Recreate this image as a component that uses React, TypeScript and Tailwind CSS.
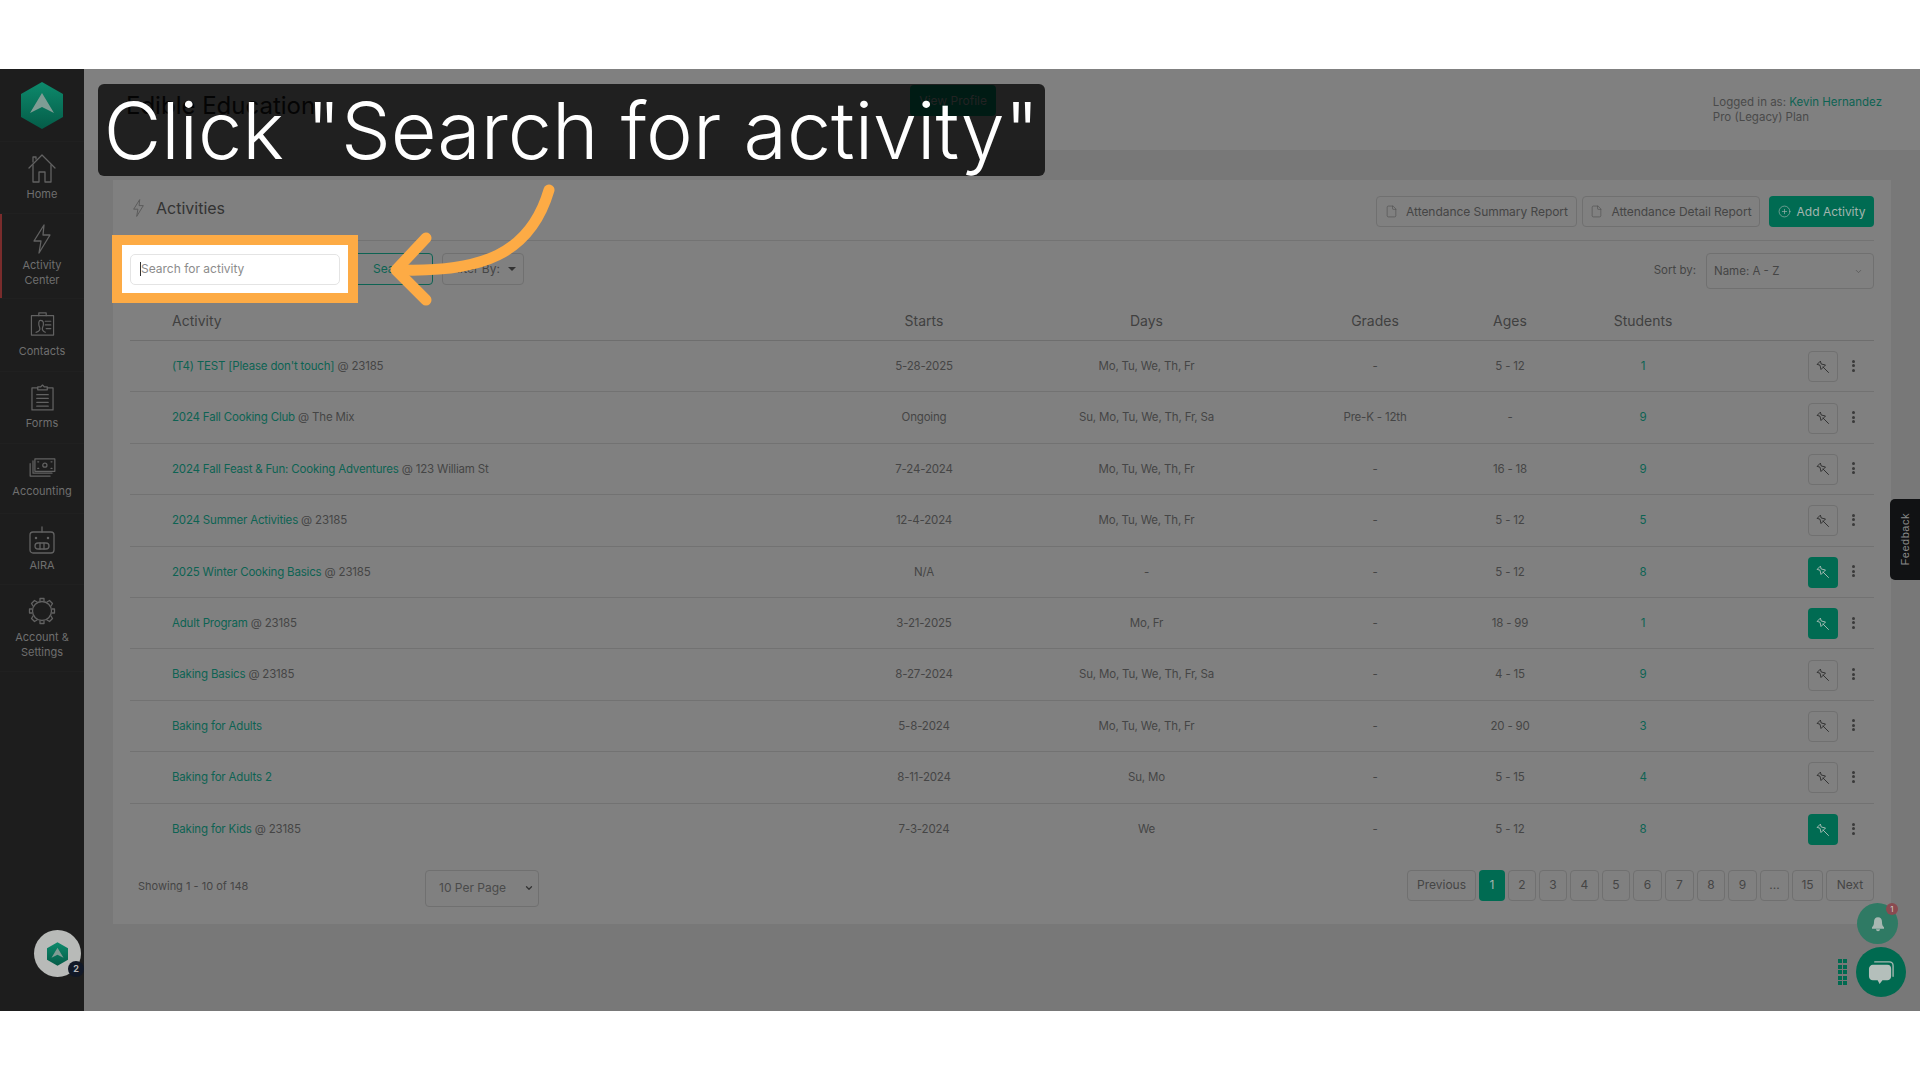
import { ChevronDown, CirclePlus, File } from 'lucide-react';

const rows = [
    { name: '(T4) TEST [Please don\'t touch]', place: '@ 23185', starts: '5-28-2025', days: 'Mo, Tu, We, Th, Fr', grades: '-', ages: '5 - 12', students: '1', pinned: false },
    { name: '2024 Fall Cooking Club', place: '@ The Mix', starts: 'Ongoing', days: 'Su, Mo, Tu, We, Th, Fr, Sa', grades: 'Pre-K - 12th', ages: '-', students: '9', pinned: false },
    { name: '2024 Fall Feast & Fun: Cooking Adventures', place: '@ 123 William St', starts: '7-24-2024', days: 'Mo, Tu, We, Th, Fr', grades: '-', ages: '16 - 18', students: '9', pinned: false },
    { name: '2024 Summer Activities', place: '@ 23185', starts: '12-4-2024', days: 'Mo, Tu, We, Th, Fr', grades: '-', ages: '5 - 12', students: '5', pinned: false },
    { name: '2025 Winter Cooking Basics', place: '@ 23185', starts: 'N/A', days: '-', grades: '-', ages: '5 - 12', students: '8', pinned: true },
    { name: 'Adult Program', place: '@ 23185', starts: '3-21-2025', days: 'Mo, Fr', grades: '-', ages: '18 - 99', students: '1', pinned: true },
    { name: 'Baking Basics', place: '@ 23185', starts: '8-27-2024', days: 'Su, Mo, Tu, We, Th, Fr, Sa', grades: '-', ages: '4 - 15', students: '9', pinned: false },
    { name: 'Baking for Adults', place: '', starts: '5-8-2024', days: 'Mo, Tu, We, Th, Fr', grades: '-', ages: '20 - 90', students: '3', pinned: false },
    { name: 'Baking for Adults 2', place: '', starts: '8-11-2024', days: 'Su, Mo', grades: '-', ages: '5 - 15', students: '4', pinned: false },
    { name: 'Baking for Kids', place: '@ 23185', starts: '7-3-2024', days: 'We', grades: '-', ages: '5 - 12', students: '8', pinned: true },
];

const pages = [
    { label: '2', w: 'w-[28px]' },
    { label: '3', w: 'w-[28px]' },
    { label: '4', w: 'w-[29px]' },
    { label: '5', w: 'w-[28px]' },
    { label: '6', w: 'w-[29px]' },
    { label: '7', w: 'w-[29px]' },
    { label: '8', w: 'w-[28px]' },
    { label: '9', w: 'w-[29px]' },
    { label: '...', w: 'w-[29px]' },
    { label: '15', w: 'w-[31px]' },
];

const gridCols = 'grid grid-cols-[704px_180px_265px_192px_78px_188px_137px] items-center';

function Logo({ className }: { className: string }) {
    return (
        <svg viewBox="0 0 42 47" className={className}>
            <defs>
                <linearGradient id="hex" x1="0" y1="0" x2="0" y2="1">
                    <stop offset="0" stopColor="#0d8a6c" />
                    <stop offset="1" stopColor="#055c48" />
                </linearGradient>
            </defs>
            <path d="M21 0 L42 12 V35 L21 47 L0 35 V12 Z" fill="url(#hex)" />
            <path d="M21 11 L33 31 L21 25 L9 31 Z" fill="#7f9c94" />
        </svg>
    );
}

function PinIcon({ color }: { color: string }) {
    return (
        <svg viewBox="0 0 14 14" className="w-[14px] h-[14px]" fill="none" stroke={color} strokeWidth="0.9" strokeLinejoin="round" strokeLinecap="round">
            <path d="M4.500 1.500 L5.200 4 L9.500 5 L5 9.500 L4 5.200 L1.500 4.500 Z" />
            <path d="M7 7 L12.500 12.500" />
        </svg>
    );
}

function NavIcon({ name }: { name: string }) {
    const common = { fill: 'none', stroke: '#626262', strokeWidth: 1.3, strokeLinejoin: 'round' as const, strokeLinecap: 'round' as const };
    if (name === 'home') {
        return (
            <svg viewBox="0 0 28 30" className="w-[28px] h-[30px]" {...common}>
                <path d="M1 14 L14 1 L27 14" />
                <path d="M5 11 V28 H11 V18 H17 V28 H23 V11" />
                <path d="M5 8 V3 H8 V5" />
            </svg>
        );
    }
    if (name === 'bolt') {
        return (
            <svg viewBox="0 0 18 30" className="w-[18px] h-[30px]" {...common}>
                <path d="M11 1 L1 17 H8 L6 29 L17 11 H10 Z" />
            </svg>
        );
    }
    if (name === 'contacts') {
        return (
            <svg viewBox="0 0 26 26" className="w-[25px] h-[24px]" {...common}>
                <path d="M1 4 H25 V25 H1 Z" />
                <path d="M9 4 V1 H17 V4" />
                <path d="M6 22 C9 21 11 20 10 17 C8 12 9 9 11 9 C14 9 15 12 13 17 C12 20 14 21 16 22" />
                <path d="M16 10 H22 M16 14 H22 M17 18 H22" />
            </svg>
        );
    }
    if (name === 'forms') {
        return (
            <svg viewBox="0 0 24 28" className="w-[23px] h-[27px]" {...common}>
                <path d="M7 4 H1 V27 H23 V4 H17" />
                <path d="M7 6 V3 H10 L12 1 L14 3 H17 V6 Z" />
                <path d="M6 11 H18 M6 15 H18 M6 19 H18 M6 23 H18" />
            </svg>
        );
    }
    if (name === 'money') {
        return (
            <svg viewBox="0 0 28 20" className="w-[27px] h-[19px]" {...common}>
                <path d="M6 1 H27 V14 H6 Z" />
                <path d="M4 3 V16 H24" />
                <path d="M1 6 V19 H22" />
                <circle cx="16.5" cy="7.5" r="2.2" />
                <path d="M9 4 H10 M23 4 H24 M9 11 H10 M23 11 H24" />
            </svg>
        );
    }
    if (name === 'bot') {
        return (
            <svg viewBox="0 0 26 28" className="w-[26px] h-[28px]" {...common}>
                <path d="M13 1 V6" />
                <rect x="1" y="6" width="24" height="21" rx="3" />
                <circle cx="7" cy="12" r="0.6" />
                <circle cx="19" cy="12" r="0.6" />
                <rect x="6" y="17" width="14" height="6" rx="3" />
                <path d="M11 17 V23 M15 17 V23" />
            </svg>
        );
    }
    return (
        <svg viewBox="0 0 28 28" className="w-[28px] h-[28px]" {...common}>
            <circle cx="14" cy="14" r="9.5" />
            <path d="M12 4 V1.500 H16 V4 M24 12 H26.500 V16 H24 M12 24 V26.500 H16 V24 M4 12 H1.500 V16 H4" />
            <path d="M5 9 L3.500 6.500 L6.500 3.500 L9 5 M19 5 L21.500 3.500 L24.500 6.500 L23 9 M23 19 L24.500 21.500 L21.500 24.500 L19 23 M9 23 L6.500 24.500 L3.500 21.500 L5 19" />
        </svg>
    );
}

function NavItem({ icon, label, height, gap, active }: { icon: string; label: string[]; height: string; gap: string; active?: boolean }) {
    return (
        <div className={`${height} relative flex flex-col items-center justify-center border-b border-[#202020]`}>
            {active && <div className="absolute left-0 top-0 bottom-0 w-[2px] bg-[#7a2c2c]" />}
            <NavIcon name={icon} />
            <div className={`${gap} text-[11px] leading-[15px] text-center text-[#6f6f6f]`}>
                {label.map((line) => (
                    <div key={line}>{line}</div>
                ))}
            </div>
        </div>
    );
}

function Sidebar() {
    return (
        <aside className="w-[84px] shrink-0 bg-[#1d1d1d] flex flex-col">
            <div className="h-[73px] flex items-center justify-center border-b border-[#202020]">
                <Logo className="w-[42px] h-[47px]" />
            </div>
            <NavItem icon="home" label={['Home']} height="h-[72px]" gap="mt-[3px]" />
            <NavItem icon="bolt" label={['Activity', 'Center']} height="h-[85px]" gap="mt-[4px]" active />
            <NavItem icon="contacts" label={['Contacts']} height="h-[73px]" gap="mt-[8px]" />
            <NavItem icon="forms" label={['Forms']} height="h-[72px]" gap="mt-[5px]" />
            <NavItem icon="money" label={['Accounting']} height="h-[70px]" gap="mt-[7px]" />
            <NavItem icon="bot" label={['AIRA']} height="h-[71px]" gap="mt-[4px]" />
            <NavItem icon="gear" label={['Account &', 'Settings']} height="h-[87px]" gap="mt-[5px]" />
        </aside>
    );
}

function ReportButton({ label, w }: { label: string; w: string }) {
    return (
        <button className={`${w} h-[31px] flex items-center justify-center gap-[8px] rounded-[4px] border border-[#707070] text-[12px] tracking-[-0.05px] text-[#454545]`}>
            <File size={13} strokeWidth={1.2} className="text-[#505050]" />
            {label}
        </button>
    );
}

function Row({ row, last }: { row: (typeof rows)[number]; last: boolean }) {
    return (
        <div className={`${gridCols} h-[51.4px] pt-[1px] text-[11.5px] tracking-[-0.18px] text-[#454545] text-center ${last ? '' : 'border-b border-[#727272]'}`}>
            <div className="pl-[42px] text-left">
                <span className="text-[#0d6353]">{row.name}</span> {row.place}
            </div>
            <div>{row.starts}</div>
            <div>{row.days}</div>
            <div>{row.grades}</div>
            <div>{row.ages}</div>
            <div className="text-[#0d6353]">{row.students}</div>
            <div className="flex items-center justify-end gap-[14px] pr-[19px]">
                {row.pinned ? (
                    <button className="w-[30px] h-[31px] rounded-[4px] bg-[#006b52] flex items-center justify-center">
                        <PinIcon color="#b0c0ba" />
                    </button>
                ) : (
                    <button className="w-[30px] h-[31px] rounded-[4px] border border-[#707070] flex items-center justify-center">
                        <PinIcon color="#2a2a2a" />
                    </button>
                )}
                <div className="flex flex-col gap-[1.5px] -mt-[2px]">
                    <span className="w-[3px] h-[3px] rounded-full bg-[#3a3a3a]" />
                    <span className="w-[3px] h-[3px] rounded-full bg-[#3a3a3a]" />
                    <span className="w-[3px] h-[3px] rounded-full bg-[#3a3a3a]" />
                </div>
            </div>
        </div>
    );
}

function Pagination() {
    return (
        <div className="flex items-center gap-[3px] text-[12px] text-[#454545]">
            <div className="w-[69px] h-[31px] flex items-center justify-center rounded-[4px] border border-[#707070]">Previous</div>
            <div className="w-[26px] h-[31px] flex items-center justify-center rounded-[4px] bg-[#006b52] text-[#a3b5af]">1</div>
            {pages.map((p) => (
                <div key={p.label} className={`${p.w} h-[31px] flex items-center justify-center rounded-[4px] border border-[#707070]`}>
                    {p.label}
                </div>
            ))}
            <div className="w-[48px] h-[31px] flex items-center justify-center rounded-[4px] border border-[#707070]">Next</div>
        </div>
    );
}

function Card() {
    return (
        <section className="h-[744px] bg-[#808080] px-[17px]">
            <div className="h-[61px] flex items-center justify-between border-b border-[#737373] pt-[3px]">
                <div className="flex items-center gap-[12px] pl-[3px] pb-[7px]">
                    <svg viewBox="0 0 18 30" className="w-[11px] h-[18px]" fill="none" stroke="#5a5a5a" strokeWidth="1.6" strokeLinejoin="round">
                        <path d="M11 1 L1 17 H8 L6 29 L17 11 H10 Z" />
                    </svg>
                    <h2 className="text-[16px] text-[#333333]">Activities</h2>
                </div>
                <div className="flex items-center">
                    <ReportButton label="Attendance Summary Report" w="w-[201px]" />
                    <div className="w-[5px]" />
                    <ReportButton label="Attendance Detail Report" w="w-[178px]" />
                    <button className="ml-[9px] w-[105px] h-[31px] flex items-center justify-center gap-[6px] rounded-[4px] bg-[#006b52] text-[12px] text-[#a3b5af]">
                        <CirclePlus size={13} strokeWidth={1.2} />
                        Add Activity
                    </button>
                </div>
            </div>
            <div className="h-[48px] pt-[12px] flex items-start justify-between">
                <div className="flex items-center">
                    <div className="w-[210px] h-[31px]" />
                    <button className="ml-[10px] w-[83px] h-[32px] rounded-[4px] border border-[#0d6353] text-[12px] text-[#0d6353] text-left pl-[22px]">Search</button>
                    <button className="ml-[9px] w-[82px] h-[32px] rounded-[4px] border border-[#707070] flex items-center justify-center gap-[8px] text-[12px] text-[#454545]">
                        Filter By:
                        <span className="w-0 h-0 border-x-[4px] border-x-transparent border-t-[4px] border-t-[#333333]" />
                    </button>
                </div>
                <div className="flex items-center gap-[10px]">
                    <span className="text-[11.5px] text-[#454545]">Sort by:</span>
                    <div className="w-[168px] h-[36px] rounded-[4px] border border-[#707070] flex items-center justify-between pl-[7px] pr-[10px] pt-[1px] text-[11.5px] text-[#454545]">
                        Name: A - Z
                        <ChevronDown size={9} className="text-[#555555]" />
                    </div>
                </div>
            </div>
            <div className={`${gridCols} h-[52px] pt-[12px] text-[14px] text-[#404040] text-center border-b border-[#6e6e6e]`}>
                <div className="pl-[42px] text-left">Activity</div>
                <div>Starts</div>
                <div>Days</div>
                <div>Grades</div>
                <div>Ages</div>
                <div>Students</div>
                <div />
            </div>
            {rows.map((row, i) => (
                <Row key={row.name} row={row} last={i === rows.length - 1} />
            ))}
            <div className="mt-[15px] flex items-start">
                <div className="w-[295px] pl-[8px] pt-[8px] text-[11px] text-[#454545]">Showing 1 - 10 of 148</div>
                <div className="w-[114px] h-[37px] rounded-[4px] border border-[#707070] flex items-center justify-between pl-[13px] pr-[4px] text-[12px] text-[#4a4a4a]">
                    10 Per Page
                    <ChevronDown size={10} strokeWidth={3} className="text-[#333333]" />
                </div>
                <div className="ml-auto">
                    <Pagination />
                </div>
            </div>
        </section>
    );
}

function Overlays() {
    return (
        <>
            {/* caption */}
            <div className="absolute left-[98px] top-[84px] w-[947px] h-[92px] rounded-[6px] bg-black/75 flex items-center justify-center">
                <span className="text-[79px] leading-none font-light text-white whitespace-nowrap">Click "Search for activity"</span>
            </div>

            {/* highlight round the search box */}
            <div className="absolute left-[112px] top-[235px] w-[246px] h-[68px] border-[10px] border-[#fdab45] bg-white flex items-center justify-center">
                <div className="w-[210px] h-[31px] rounded-[5px] border border-[#e4e4e4] flex items-center pl-[9px] text-[12px] text-[#8c8c8c]">
                    <span className="w-px h-[14px] bg-[#333333]" />
                    Search for activity
                </div>
            </div>

            {/* arrow */}
            <svg className="absolute left-0 top-0 pointer-events-none" width="600" height="320" fill="none" stroke="#fdab45" strokeWidth="11" strokeLinecap="round" strokeLinejoin="round">
                <path d="M549 190 C 530 255, 480 272, 402 270" />
                <path d="M426 238 L 396 270 L 426 300" />
            </svg>

            {/* feedback tab */}
            <div className="absolute right-0 top-[499px] w-[30px] h-[81px] rounded-l-[5px] bg-[#111214] flex items-center justify-center">
                <span className="-rotate-90 text-[11px] tracking-[0.5px] text-[#8a8a8a] font-['Liberation_Sans',sans-serif]">Feedback</span>
            </div>

            {/* bell */}
            <div className="absolute left-[1857px] top-[903px] w-[41px] h-[41px] rounded-full bg-[#2f7a64] flex items-center justify-center">
                <svg viewBox="0 0 24 24" className="w-[16px] h-[16px]" fill="#a8b8b2">
                    <path d="M12 2 C8 2 6 5 6 9 C6 13 5 15 3 17 V19 H21 V17 C19 15 18 13 18 9 C18 5 16 2 12 2 Z M9 20 H15 C15 22 13.500 23 12 23 C10.500 23 9 22 9 20 Z" />
                </svg>
            </div>
            <div className="absolute left-[1886px] top-[903px] w-[12px] h-[12px] rounded-full bg-[#8a4a50] flex items-center justify-center text-[8px] text-[#cccccc]">1</div>

            {/* chat launcher */}
            <div className="absolute left-[1856px] top-[947px] w-[50px] h-[50px] rounded-full bg-[#006a50] flex items-center justify-center">
                <svg viewBox="0 0 28 28" className="w-[27px] h-[27px]">
                    <path d="M7 3 H22 C25 3 26 5 26 7 V18" fill="none" stroke="#a8b8b2" strokeWidth="1.4" strokeLinecap="round" />
                    <path d="M5 6 H20 C23 6 24 8 24 10 V18 C24 21 22 22 20 22 H15 L12 26 L10 22 H5 C3 22 1 21 1 18 V10 C1 8 3 6 5 6 Z" fill="#b4bfbb" />
                </svg>
            </div>
            <div className="absolute left-[1838px] top-[959px] grid grid-cols-2 gap-x-[1px] gap-y-[1.5px]">
                {Array.from({ length: 10 }).map((_, i) => (
                    <span key={i} className="w-[4px] h-[4px] bg-[#006a50]" />
                ))}
            </div>

            {/* avatar */}
            <div className="absolute left-[34px] top-[930px] w-[47px] h-[47px] rounded-full bg-[#b8bab8] flex items-center justify-center">
                <Logo className="w-[21px] h-[24px]" />
            </div>
            <div className="absolute left-[68px] top-[961px] w-[16px] h-[16px] rounded-full bg-[#111827] flex items-center justify-center text-[9px] font-bold text-[#b8b8b8]">2</div>
        </>
    );
}

export default function App() {
    return (
        <div className="relative w-[1920px] h-[1080px] overflow-hidden bg-white font-['Inter',sans-serif]">
            <div className="h-[69px]" />
            <div className="h-[942px] flex">
                <Sidebar />
                <main className="flex-1 bg-[#787878] flex flex-col">
                    <header className="h-[81px] bg-[#808080] flex items-start justify-between pl-[42px] pr-[38px]">
                        <div className="flex items-start">
                            <h1 className="mt-[19px] text-[24px] text-[#111111]">Edible Education</h1>
                            <button className="ml-[595px] mt-[16px] w-[86px] h-[31px] rounded-[4px] bg-[#006b52] text-[12px] text-[#888888]">View Profile</button>
                        </div>
                        <div className="mt-[26px] whitespace-nowrap text-[11.5px] leading-[15px] text-[#4a4a4a]">
                            <div>
                                Logged in as: <span className="text-[#0d6353]">Kevin Hernandez</span>
                            </div>
                            <div>Pro (Legacy) Plan</div>
                        </div>
                    </header>
                    <div className="pt-[30px] pl-[29px] pr-[29px]">
                        <Card />
                    </div>
                </main>
            </div>
            <Overlays />
        </div>
    );
}
